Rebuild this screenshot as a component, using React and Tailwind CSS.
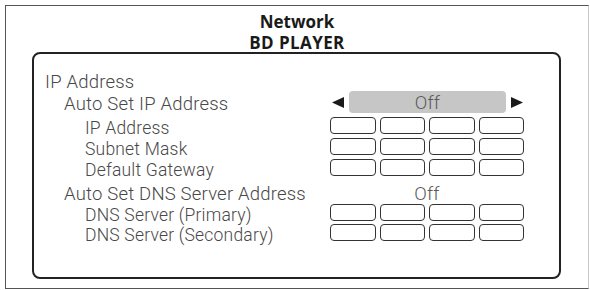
import React from "react";

const Boxes = () => (
  <div className="grid grid-cols-4 gap-[4px] w-[194px]">
    {[0, 1, 2, 3].map((i) => (
      <div key={i} className="h-[17px] border-[1.5px] border-[#333] rounded-[4px] bg-white" />
    ))}
  </div>
);

const Row = ({ label, indent, size, className, children }) => (
  <div className={"flex items-center " + className}>
    <div className={"w-[296px] whitespace-nowrap pt-[6px] " + indent + " " + size}>{label}</div>
    <div className="w-[194px] flex items-center">{children}</div>
  </div>
);

export default function App() {
  return (
    <div className="w-[590px] h-[290px] bg-white pt-[5px] pl-[5px]" style={{ fontFamily: "Roboto, 'Liberation Sans', sans-serif" }}>
      <div className="w-[584px] h-[284px] border border-[#555] border-r-[#c8c8c8] flex flex-col">
        <div className="h-[46px] flex flex-col items-center pt-[5px] text-[#1a1a1a] font-bold text-[17px] leading-[21px]" style={{ fontFamily: "'Open Sans', 'Liberation Sans', sans-serif" }}>
          <div>Network</div>
          <div className="tracking-[0.4px]">BD PLAYER</div>
        </div>
        <div className="ml-[26px] w-[529px] h-[227px] border-2 border-[#222] rounded-[8px] pt-[15px] font-light text-[#484848] tracking-[0.2px]">
          <div className="h-[22px] flex items-center pl-[11px] pt-[6px] text-[18.5px]">IP Address</div>
          <Row label="Auto Set IP Address" indent="pl-[30px]" size="text-[18.5px]" className="h-[22px]">
            <svg width="12" height="11" viewBox="0 0 12 11" className="ml-[2px]"><polygon points="0,5.5 12,0 12,11" fill="#1a1a1a" /></svg>
            <div className="ml-[5px] w-[157px] h-[22px] rounded-[4px] bg-[#c6c6c6] flex items-center justify-center pt-[4px] text-[18.5px] text-[#5a5a5a]">Off</div>
            <svg width="12" height="11" viewBox="0 0 12 11" className="ml-[5px]"><polygon points="12,5.5 0,0 0,11" fill="#1a1a1a" /></svg>
          </Row>
          <Row label="IP Address" indent="pl-[51px]" size="text-[17.5px]" className="h-[17px] mt-[4px]"><Boxes /></Row>
          <Row label="Subnet Mask" indent="pl-[51px]" size="text-[17.5px]" className="h-[17px] mt-[4px]"><Boxes /></Row>
          <Row label="Default Gateway" indent="pl-[51px]" size="text-[17.5px]" className="h-[17px] mt-[4px]"><Boxes /></Row>
          <Row label="Auto Set DNS Server Address" indent="pl-[30px]" size="text-[18.5px]" className="h-[22px] mt-[5px]">
            <div className="w-[194px] text-center pt-[6px] text-[18.5px] text-[#5a5a5a]">Off</div>
          </Row>
          <Row label="DNS Server (Primary)" indent="pl-[51px]" size="text-[17.5px]" className="h-[17px] mt-[1px]"><Boxes /></Row>
          <Row label="DNS Server (Secondary)" indent="pl-[51px]" size="text-[17.5px]" className="h-[17px] mt-[3px]"><Boxes /></Row>
        </div>
      </div>
    </div>
  );
}
